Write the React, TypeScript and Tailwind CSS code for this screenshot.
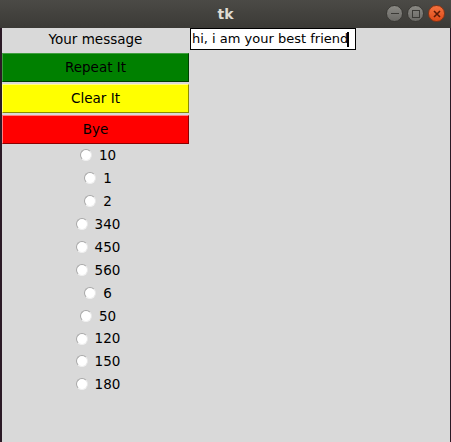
const values = ["10", "1", "2", "340", "450", "560", "6", "50", "120", "150", "180"];

function TitleBar()
{
    return (
        <div className="relative flex h-[28px] items-center justify-center bg-gradient-to-b from-[#4b4a46] to-[#3b3a36]">
            <span className="text-[14px] font-bold text-[#dfdbd2]" style={{ fontFamily: "'DejaVu Sans', sans-serif" }}>tk</span>
            <div className="absolute right-[6px] top-[5px] flex gap-[4px]">
                <div className="flex h-[17px] w-[17px] items-center justify-center rounded-full border border-[#3a3935] bg-gradient-to-b from-[#8a8984] to-[#6a6965]">
                    <div className="h-[1.5px] w-[8px] bg-[#3b3a36]" />
                </div>
                <div className="flex h-[17px] w-[17px] items-center justify-center rounded-full border border-[#3a3935] bg-gradient-to-b from-[#8a8984] to-[#6a6965]">
                    <div className="h-[8px] w-[8px] border border-[#3b3a36]" />
                </div>
                <div className="flex h-[17px] w-[17px] items-center justify-center rounded-full border border-[#8a3414] bg-gradient-to-b from-[#f4723e] to-[#df4a16]">
                    <svg width="8" height="8" viewBox="0 0 8 8">
                        <path d="M1 1L7 7M7 1L1 7" stroke="#5a1a06" strokeWidth="1.6" />
                    </svg>
                </div>
            </div>
        </div>
    );
}

function TkButton({ label, color }: { label: string; color: string })
{
    return (
        <div className={`flex h-[29px] w-[187px] items-center justify-center border ${color} text-[13.5px] text-black`}>
            {label}
        </div>
    );
}

function Radio({ value }: { value: string })
{
    return (
        <div className="flex h-[22.9px] items-center justify-center gap-[7px]">
            <div className="h-[12px] w-[12px] rounded-full border border-t-[#a8a8a8] border-l-[#a8a8a8] border-r-[#e8e8e8] border-b-[#f0f0f0] bg-white" />
            <span className="text-[13.5px] text-black">{value}</span>
        </div>
    );
}

export default function App()
{
    return (
        <div className="h-[442px] w-[451px] bg-[#d9d9d9]" style={{ fontFamily: "'DejaVu Sans', sans-serif" }}>
            <TitleBar />
            <div className="flex h-[414px] border-l-2 border-r border-l-[#2b1a26] border-r-[#2b1a26]">
                <div className="flex w-[187px] flex-col gap-[2px]">
                    <div className="flex h-[23px] items-center justify-center text-[13.5px] text-black">Your message</div>
                    <TkButton label="Repeat It" color="bg-[#008000] border-t-[#3f9f3f] border-l-[#3f9f3f] border-b-[#004000] border-r-[#004000]" />
                    <TkButton label="Clear It" color="bg-[#ffff00] border-t-[#ffff80] border-l-[#ffff80] border-b-[#8c8c00] border-r-[#8c8c00]" />
                    <TkButton label="Bye" color="bg-[#ff0000] border-t-[#ff8080] border-l-[#ff8080] border-b-[#8c0000] border-r-[#8c0000]" />
                    <div className="mt-[-2px] flex flex-col pl-[5px]">
                        {values.map((v) => (
                            <Radio key={v} value={v} />
                        ))}
                    </div>
                </div>
                <div className="ml-[1px]">
                    <div className="flex h-[22px] w-[166px] items-center border border-black bg-white pl-[1px] text-[13px] text-black">
                        hi, i am your best friend
                        <div className="ml-[-1px] h-[15px] w-[2px] bg-black" />
                    </div>
                </div>
            </div>
        </div>
    );
}
